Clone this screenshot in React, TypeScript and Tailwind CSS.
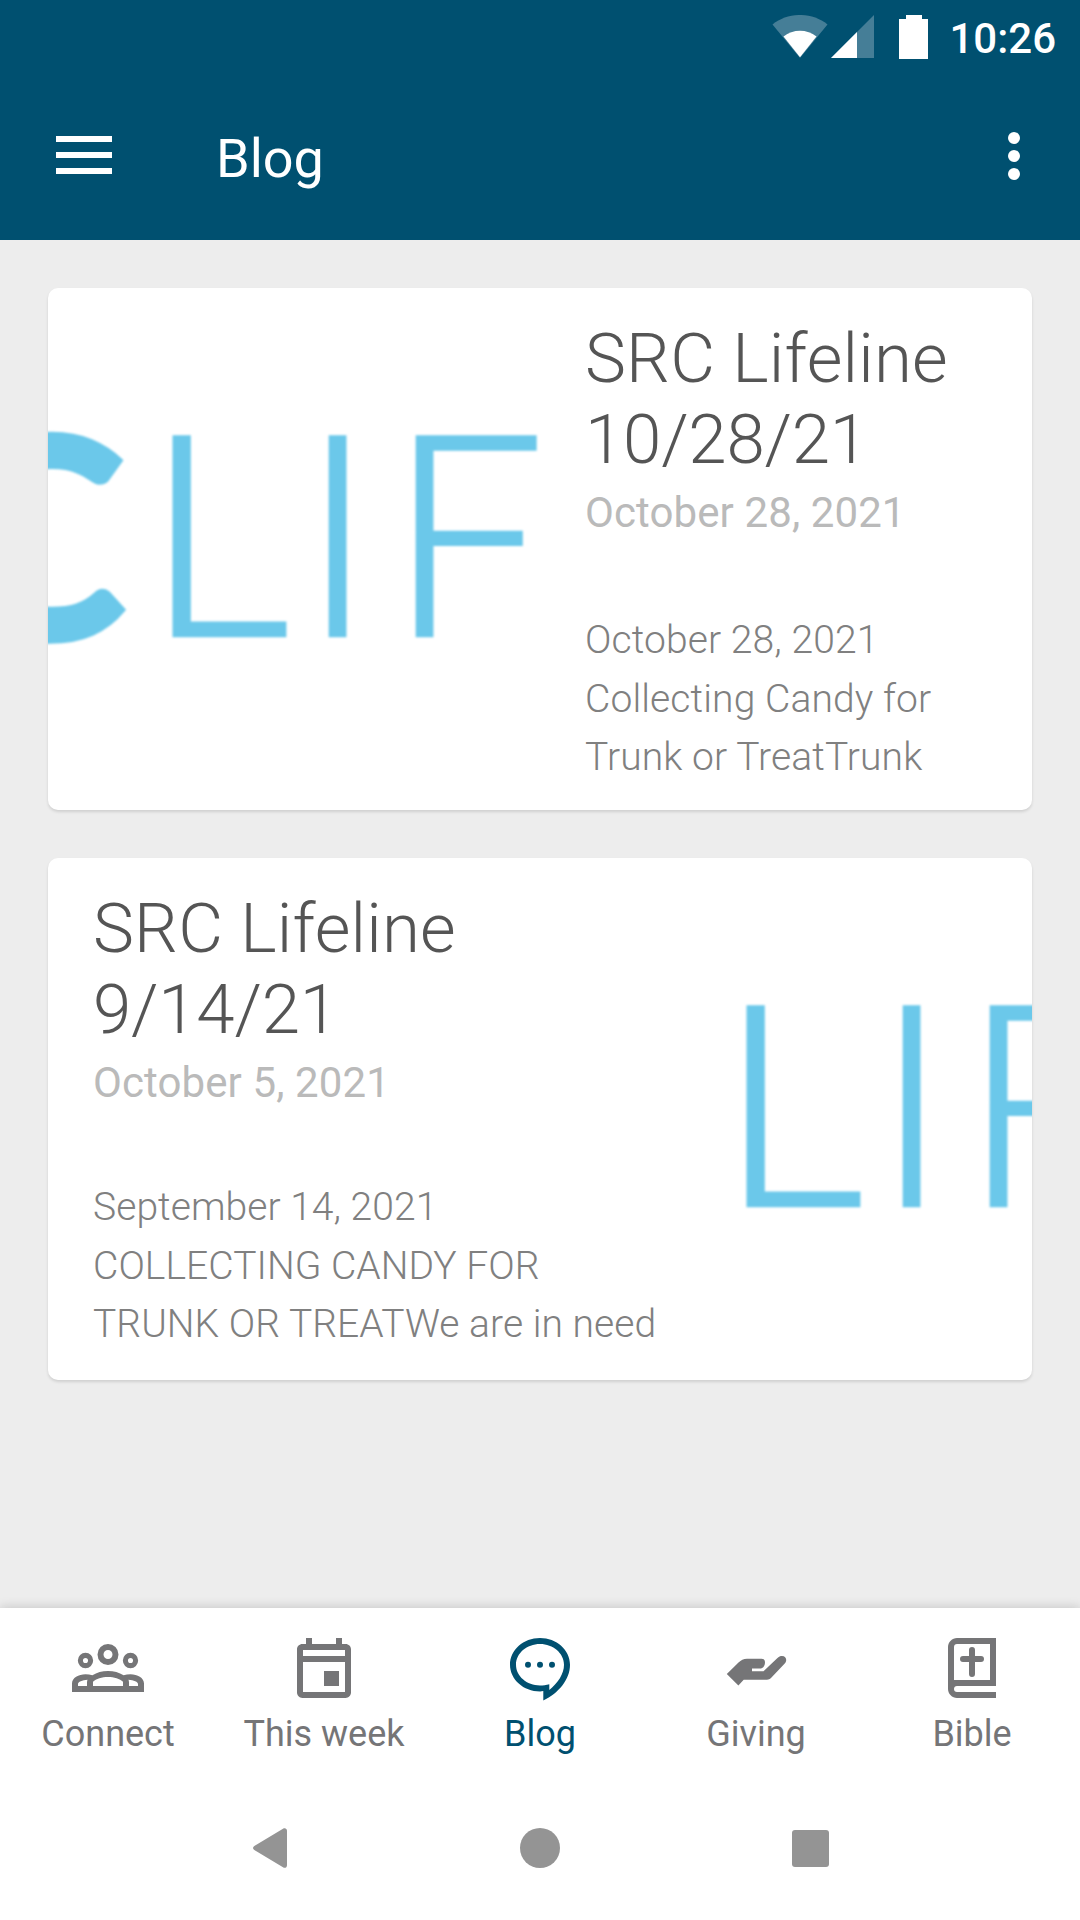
import type { ReactNode } from "react";

function StatusBar() {
  return (
    <div className="flex h-[72px] items-start justify-end pr-6 text-white">
      <svg className="mt-[15px]" width="56" height="44" viewBox="0 0 56 44">
        <path d="M0.5 9.5C16 -3.2 40 -3.2 55.5 9.5L28 43Z" fill="#457e97" />
        <path d="M11.5 21.6C21 13.8 35 13.8 44.5 21.6L28 42.2Z" fill="#fff" />
      </svg>
      <svg className="mt-[15px] ml-[2px]" width="45" height="43" viewBox="0 0 45 43">
        <path d="M44 0V43H1Z" fill="#457e97" />
        <path d="M27 17V43H1Z" fill="#fff" />
      </svg>
      <svg className="mt-[15px] ml-6" width="29" height="44" viewBox="0 0 29 44">
        <path d="M7 0H23V4H29V44H0V4H7Z" fill="#fff" />
      </svg>
      <span className="mt-[14px] ml-[21px] text-[42px] leading-[50px] font-medium">10:26</span>
    </div>
  );
}

function AppBar() {
  return (
    <div className="flex h-[168px] items-start text-white">
      <div className="mt-16 ml-14 flex w-14 flex-col gap-[10px]">
        <div className="h-[6px] bg-white" />
        <div className="h-[6px] bg-white" />
        <div className="h-[6px] bg-white" />
      </div>
      <h1 className="mt-[55px] ml-[104px] text-[54px] leading-[64px] font-normal">Blog</h1>
      <div className="mt-[60px] mr-[60px] ml-auto flex flex-col gap-[6px]">
        <div className="size-3 rounded-full bg-white" />
        <div className="size-3 rounded-full bg-white" />
        <div className="size-3 rounded-full bg-white" />
      </div>
    </div>
  );
}

/* Newsletter wordmark, cropped by the thumbnail that contains it. */
function Thumbnail({ width, shift, showC }: { width: number; shift: number; showC: boolean }) {
  return (
    <svg
      className="block shrink-0"
      width={width}
      height="522"
      viewBox={`${shift} 0 ${width} 522`}
      fill="#6bc8ea"
      stroke="#6bc8ea"
      fontFamily="Lato"
    >
      <g className="blur-[0.8px]">
        {showC && (
          <text x="-107" y="351" fontSize="280" fontWeight="700" strokeWidth="5">
            C
          </text>
        )}
        <g fontSize="277" fontWeight="300" strokeWidth="3.5">
          <text transform="translate(96.5 347.5) scale(1.03 1.013)">L</text>
          <text transform="translate(253.5 347.5) scale(1 1.013)">I</text>
          <text transform="translate(340.5 347.5) scale(1 1.013)">F</text>
        </g>
      </g>
    </svg>
  );
}

interface Post {
  title: string[];
  date: string;
  body: string[];
}

function PostText({ post, className, bodyClass }: { post: Post; className: string; bodyClass: string }) {
  return (
    <div className={className}>
      <h2 className="text-[69px] leading-[81px] font-light text-[#555]">
        <div className="tracking-[0.2px]">{post.title[0]}</div>
        <div className="tracking-[-0.2px]">{post.title[1]}</div>
      </h2>
      <div className="mt-2 text-[42px] leading-[49px] tracking-[0.1px] text-[#bababa]">{post.date}</div>
      <div className={bodyClass}>
        {post.body.map((t) => (
          <div key={t}>{t}</div>
        ))}
      </div>
    </div>
  );
}

const first: Post = {
  title: ["SRC Lifeline", "10/28/21"],
  date: "October 28, 2021",
  body: ["October 28, 2021", "Collecting Candy for", "Trunk or TreatTrunk"],
};

const second: Post = {
  title: ["SRC Lifeline", "9/14/21"],
  date: "October 5, 2021",
  body: ["September 14, 2021", "COLLECTING CANDY FOR", "TRUNK OR TREATWe are in need"],
};

function NavItem({ label, active, children }: { label: string; active?: boolean; children: ReactNode }) {
  return (
    <div className={active ? "flex w-[216px] flex-col items-center text-[#005070]" : "flex w-[216px] flex-col items-center text-[#757577]"}>
      <svg className="mt-6" width="72" height="72" viewBox="0 0 24 24" fill="currentColor">
        {children}
      </svg>
      <span className="mt-[9px] text-[36px] leading-[42px] whitespace-nowrap">{label}</span>
    </div>
  );
}

function BottomNav() {
  return (
    <nav className="flex h-[168px] bg-white shadow-[0_-1px_10px_rgba(0,0,0,0.16)]">
      <NavItem label="Connect">
        <circle cx="12" cy="7.5" r="2.5" fill="none" stroke="currentColor" strokeWidth="2" />
        <circle cx="4.5" cy="9.5" r="1.7" fill="none" stroke="currentColor" strokeWidth="1.7" />
        <circle cx="19.5" cy="9.5" r="1.7" fill="none" stroke="currentColor" strokeWidth="1.7" />
        <path
          fillRule="evenodd"
          d="M0 20V17.2C0 15.3 2.2 14.1 4.5 14.1C5.3 14.1 6.1 14.2 6.8 14.4C8.3 13.5 10 13 12 13S15.7 13.5 17.2 14.4C17.9 14.2 18.7 14.1 19.5 14.1C21.8 14.1 24 15.3 24 17.2V20ZM2 18H5V16.8C5 16.4 5.1 16.1 5.2 15.9C3.4 16 2 16.6 2 17.3ZM7 18H17V16.6C16 15.6 14 15 12 15S8 15.6 7 16.6ZM19 18H22V17.3C22 16.6 20.6 16 18.8 15.9C18.9 16.1 19 16.4 19 16.8Z"
        />
      </NavItem>
      <NavItem label="This week">
        <path
          fillRule="evenodd"
          d="M6 2H8V4H16V2H18V4H19.2C20.2 4 21 4.8 21 5.8V20.2C21 21.2 20.2 22 19.2 22H4.8C3.8 22 3 21.2 3 20.2V5.8C3 4.8 3.8 4 4.8 4H6ZM5 6V8H19V6ZM5 10V20H19V10ZM12 13H17V18H12Z"
        />
      </NavItem>
      <NavItem label="Blog" active>
        <path
          fillRule="evenodd"
          d="M12 2C6.5 2 2 6 2 10.9C2 15.8 6.5 19.8 12 19.8C12.4 19.8 12.7 19.8 13.1 19.7V22.8C18.2 20.4 22 15.8 22 10.9C22 6 17.5 2 12 2ZM12 4C16.4 4 20 7.1 20 10.9C20 13.9 18 17 15.1 19.3V17.4C14.1 17.7 13 17.8 12 17.8C7.6 17.8 4 14.7 4 10.9C4 7.1 7.6 4 12 4Z"
        />
        <circle cx="8" cy="10.9" r="1" />
        <circle cx="12" cy="10.9" r="1" />
        <circle cx="16" cy="10.9" r="1" />
      </NavItem>
      <NavItem label="Giving">
        <path
          transform="scale(.33333)"
          d="M6.8 42L18.5 30.5C21 28 23.5 26.7 27 26.7H41.5C43.5 26.7 45 28 45 30.2C45 34 43 36.6 39.5 36.6H32V39.2H43.5L57.2 26.2C58.8 24.6 60.4 24 62 24C64.8 24 66.2 26 66.2 28C66.2 29.6 65.6 30.6 64.5 31.8L51 46C49.8 47.2 48.5 47.7 47 47.7H23.7L18.4 53.6Z"
        />
      </NavItem>
      <NavItem label="Bible">
        <path
          fillRule="evenodd"
          d="M7 2H20V18H7C6.4 18 6 18.4 6 19S6.4 20 7 20H20V22H7C5.4 22 4 20.6 4 19V5C4 3.4 5.4 2 7 2ZM7 4C6.4 4 6 4.4 6 5V16H18V4Z"
        />
        <path d="M12 6V14M9 9H15" fill="none" stroke="currentColor" strokeWidth="2" strokeLinecap="round" />
      </NavItem>
    </nav>
  );
}

function SystemNav() {
  return (
    <div className="relative flex h-36 items-start bg-white">
      <svg className="mt-[52px] ml-[253px]" width="34" height="40" viewBox="0 0 34 40">
        <path d="M1.3 18L30 .7C32 -.5 34 .6 34 2.8V37.2C34 39.4 32 40.5 30 39.3L1.3 22C-.4 21-.4 19 1.3 18Z" fill="#949494" />
      </svg>
      <div className="mt-[52px] ml-[233px] size-10 rounded-full bg-[#949494]" />
      <div className="mt-[54px] ml-[232px] size-[37px] rounded-[3px] bg-[#949494]" />
    </div>
  );
}

export default function App() {
  return (
    <div className="flex h-[1920px] w-[1080px] flex-col overflow-hidden bg-[#ededed] font-['Roboto',sans-serif]">
      <header className="bg-[#005070]">
        <StatusBar />
        <AppBar />
      </header>
      <main className="flex flex-1 flex-col gap-12 px-12 pt-12">
        <article className="flex h-[522px] overflow-hidden rounded-[10px] bg-white shadow-[0_2px_3px_rgba(0,0,0,0.12)]">
          <Thumbnail width={492} shift={0} showC />
          <PostText
            post={first}
            className="pt-[30px] pl-[45px]"
            bodyClass="mt-[74px] text-[39px] leading-[58.5px] font-light tracking-[0.1px] text-[#808080]"
          />
        </article>
        <article className="flex h-[522px] overflow-hidden rounded-[10px] bg-white shadow-[0_2px_3px_rgba(0,0,0,0.12)]">
          <PostText
            post={second}
            className="w-[657px] pt-[30px] pl-[45px]"
            bodyClass="mt-[71px] text-[39px] leading-[58.5px] font-light tracking-[0.05px] whitespace-nowrap text-[#808080]"
          />
          <Thumbnail width={327} shift={83} showC={false} />
        </article>
      </main>
      <BottomNav />
      <SystemNav />
    </div>
  );
}
